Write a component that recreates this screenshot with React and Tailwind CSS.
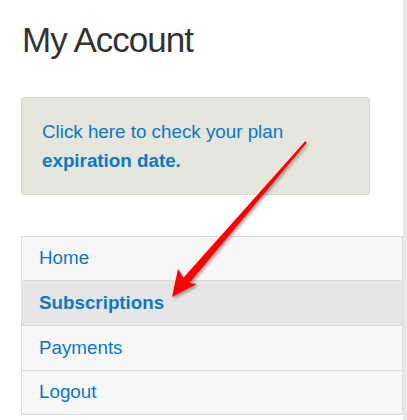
import React from "react";

const navItems = [
  { label: "Home" },
  { label: "Subscriptions", active: true },
  { label: "Payments" },
  { label: "Logout" },
];

// Red annotation arrow drawn over the page
const Arrow = () => (
  <svg
    className="absolute left-0 top-0 pointer-events-none"
    width="407"
    height="420"
    viewBox="0 0 407 420"
  >
    <defs>
      <filter id="arrowShadow" x="-20%" y="-20%" width="140%" height="140%">
        <feDropShadow dx="1.5" dy="2" stdDeviation="1.5" floodColor="#000" floodOpacity="0.35" />
      </filter>
    </defs>
    <polygon
      points="305.2,141.3 183.4,277.7 178,269 172,297 197,284 189.4,282.9 306.8,142.7"
      fill="#ff0000"
      filter="url(#arrowShadow)"
    />
  </svg>
);

const App = () => {
  return (
    <div
      className="relative w-[407px] h-[420px] flex bg-white overflow-hidden"
      style={{ fontFamily: '"Liberation Sans", Arial, sans-serif' }}
    >
      {/* Main Content */}
      <main className="w-[403px] flex flex-col pl-[21px]">
        <h1 className="mt-[20px] ml-px text-[35px] leading-[39.6px] tracking-[-1px] text-[#333333]">
          My Account
        </h1>

        {/* Plan notice */}
        <div className="mt-[37px] mr-[33px] h-[98px] rounded-[3px] border border-[#d6d6cb] bg-[#e6e6dc] px-[20px] pt-[19px]">
          <a className="block text-[18.8px] leading-[29px] text-[#0b79c7]">
            Click here to check your plan <b>expiration date.</b>
          </a>
        </div>

        {/* Account nav */}
        <ul className="mt-[41px] flex flex-col border-l border-[#dcdcdc]">
          {navItems.map((item) => (
            <li
              key={item.label}
              className={`h-[45px] first:h-[44px] flex items-center pl-[17px] border-t border-r border-[#dcdcdc] last:border-b text-[18.8px] text-[#0b79c7] ${
                item.active ? "bg-[#e6e6e6] font-bold" : "bg-[#f7f7f7]"
              }`}
            >
              {item.label}
            </li>
          ))}
        </ul>
      </main>

      {/* Right edge */}
      <div className="w-[4px] h-full bg-[#e8e8e8]" />

      <Arrow />
    </div>
  );
};

export default App;
